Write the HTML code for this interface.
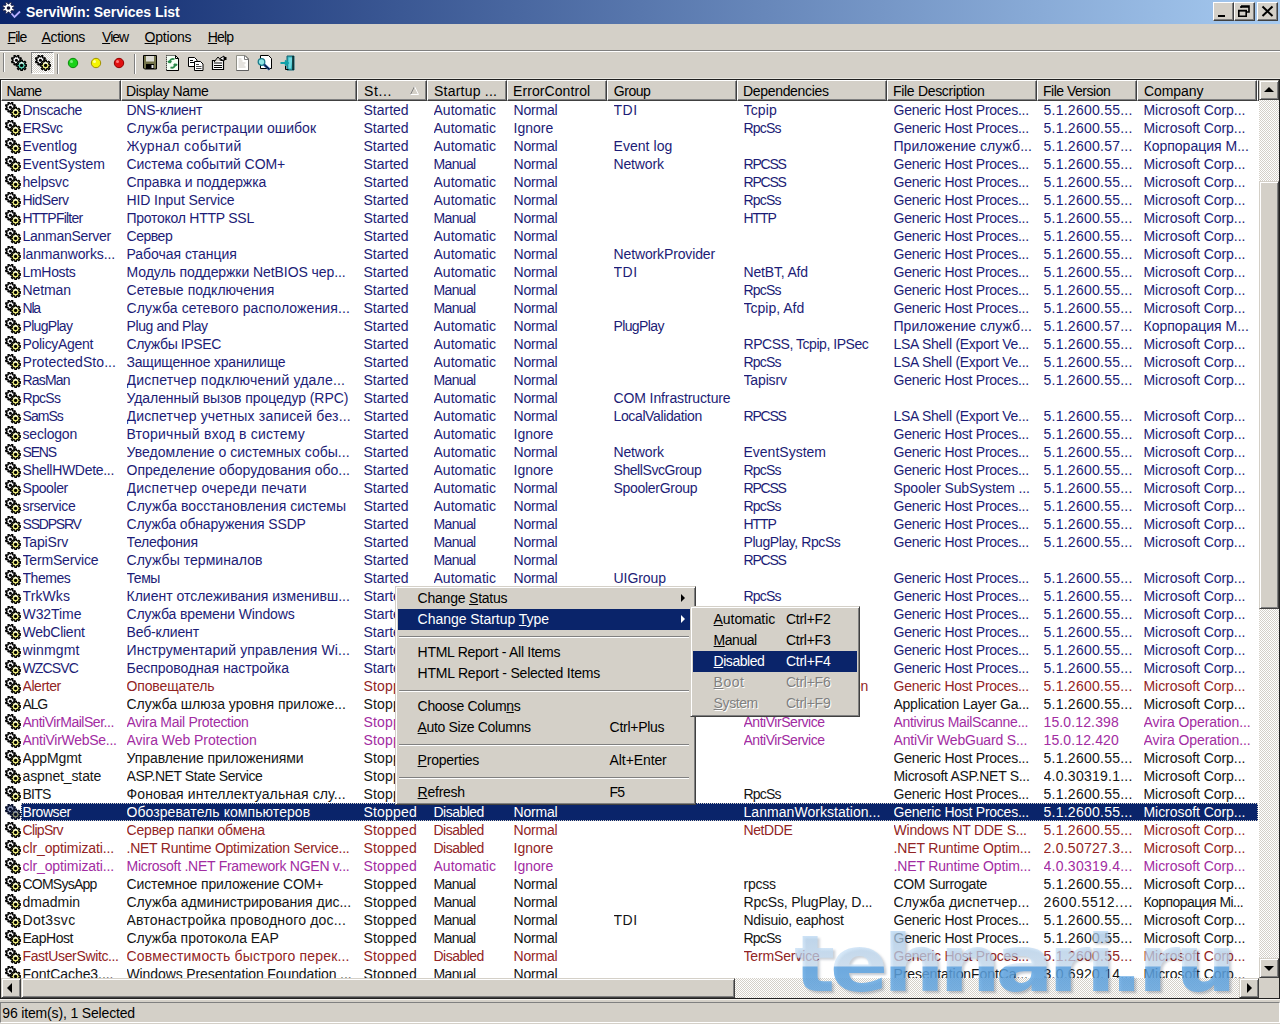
<!DOCTYPE html>
<html lang="ru">
<head>
<meta charset="utf-8">
<title>ServiWin: Services List</title>
<style>
*{box-sizing:border-box;margin:0;padding:0}
html,body{width:1280px;height:1024px;overflow:hidden;background:#d4d0c8}
body{font-family:"Liberation Sans","DejaVu Sans",sans-serif;font-size:14px;color:#000;position:relative}
#win{position:absolute;left:0;top:0;width:1280px;height:1024px;overflow:hidden;background:#d4d0c8}
#title{position:absolute;left:0;top:0;width:1280px;height:24px;background:linear-gradient(90deg,#0a246a 0%,#a6caf0 100%)}
#title .tt{position:absolute;left:26px;top:2px;line-height:20px;font-size:14px;font-weight:bold;color:#fff;white-space:nowrap;letter-spacing:-0.05px}
.wb{position:absolute;top:2px;width:21px;height:19px;background:#d4d0c8;border:1px solid;border-color:#fff #404040 #404040 #fff;box-shadow:inset -1px -1px 0 #808080}
#menubar{position:absolute;left:0;top:24px;width:1280px;height:25px}
#menubar span{position:absolute;top:3px;line-height:20px;white-space:nowrap}
u{text-decoration:underline;text-underline-offset:1px}
#tbsep{position:absolute;left:0;top:50px;width:1280px;height:2px;border-top:1px solid #808080;border-bottom:1px solid #fff}
#toolbar{position:absolute;left:0;top:51px;width:1280px;height:27px}
.vsep{position:absolute;top:3px;width:2px;height:20px;border-left:1px solid #808080;border-right:1px solid #fff}
.grip{position:absolute;left:3px;top:2px;width:2px;height:19px;border-left:1px solid #808080;border-right:1px solid #fff}
.ti{position:absolute;top:4px;width:16px;height:16px}
#listbg{position:absolute;left:0;top:78px;width:1280px;height:921px;background:#fff;border-top:1px solid #e8e6e0}
#frame{position:absolute;left:0;top:79px;width:1280px;height:920px;border:1px solid #202020;pointer-events:none}
#rowsclip{position:absolute;left:0;top:0;width:1259px;height:978px;overflow:hidden}
#hdr{position:absolute;left:0;top:80px;width:1259px;height:21px}
.hc{position:absolute;top:0;height:21px;background:#d4d0c8;border:1px solid;border-color:#fff #404040 #404040 #fff;box-shadow:inset -1px -1px 0 #808080;overflow:hidden;white-space:nowrap}
.hc span{position:absolute;left:5px;top:1px;line-height:19px}
.sort{position:absolute;left:52px;top:5px}
.r{position:absolute;left:0;width:1258px;height:18px;white-space:nowrap}
.ic{position:absolute;left:5px;top:.5px}
.c{position:absolute;top:0;line-height:18px;height:18px;overflow:hidden;white-space:nowrap}
.c0{left:22.5px;width:98px}.c1{left:126.5px;width:230px}.c2{left:363.5px;width:63px}.c3{left:433.5px;width:73px}.c4{left:513.5px;width:93px}
.c5{left:613.5px;width:123px}.c6{left:743.5px;width:143px}.c7{left:893.5px;width:143px}.c8{left:1043.5px;width:93px}.c9{left:1143.5px;width:113px}
.b{color:#1c1c76}.rd{color:#922424}.p{color:#a22ca2}.k{color:#141414}
.sel{color:#fff}
.selbg{position:absolute;left:21px;top:0;width:1237px;height:18px;background:#0a246a;outline:1px dotted #d4d0c8;outline-offset:-1px}
.dith{background-color:#fff;background-image:conic-gradient(#d4d0c8 25%,#fff 0 50%,#d4d0c8 0 75%,#fff 0);background-size:2px 2px}
.sb{position:absolute;background:#d4d0c8;border:1px solid;border-color:#d4d0c8 #404040 #404040 #d4d0c8;box-shadow:inset 1px 1px 0 #fff,inset -1px -1px 0 #808080}
.ar{position:absolute;width:0;height:0}
#status{position:absolute;left:0;top:999px;width:1280px;height:25px;border-top:1px solid #f4f2ee}
#spane{position:absolute;left:0;top:2px;width:1280px;height:21px;border:1px solid;border-color:#808080 #fff #fff #808080}
#status span{position:absolute;left:2px;top:3px;line-height:20px;white-space:nowrap}
.menu{position:absolute;background:#d4d0c8;border:1px solid;border-color:#d4d0c8 #404040 #404040 #d4d0c8;box-shadow:inset 1px 1px 0 #fff,inset -1px -1px 0 #808080}
.mi{position:absolute;left:2px;height:21px;line-height:21px;white-space:nowrap}
.mi .t{position:absolute;top:0}
.mi.h{background:#0a246a;color:#fff}
.mi.d{color:#808080;text-shadow:1px 1px 0 #fff}
.ms{position:absolute;left:3px;height:2px;border-top:1px solid #808080;border-bottom:1px solid #fff}
.ma{position:absolute;top:6px;width:0;height:0;border-top:4px solid transparent;border-bottom:4px solid transparent;border-left:4px solid #000}
.h .ma{border-left-color:#fff}
#wm{position:absolute;left:794px;top:914px;height:100px;font-family:"DejaVu Sans","Liberation Sans",sans-serif;font-weight:bold;font-size:78px;line-height:100px;white-space:nowrap;letter-spacing:-4.5px;transform:scaleX(1.1);transform-origin:0 0;color:transparent;background:linear-gradient(180deg,rgba(165,203,238,.7) 0%,rgba(205,227,247,.7) 52%,rgba(90,162,226,.82) 53%,rgba(120,182,234,.82) 100%);-webkit-background-clip:text;background-clip:text;filter:drop-shadow(2px 2px 1px rgba(40,60,90,.35))}
</style>
</head>
<body>
<svg width="0" height="0" style="position:absolute">
<defs>
<g id="gear">
<path d="M10.2 6.6 9.8 7.6 8.1 7.3 7.5 7.9 7.8 9.6 6.8 10.0 5.8 8.6 5.0 8.6 4.0 10.0 3.0 9.6 3.3 7.9 2.7 7.3 1.0 7.6 0.6 6.6 2.0 5.6 2.0 4.8 0.6 3.8 1.0 2.8 2.7 3.1 3.3 2.5 3.0 0.8 4.0 0.4 5.0 1.8 5.8 1.8 6.8 0.4 7.8 0.8 7.5 2.5 8.1 3.1 9.8 2.8 10.2 3.8 8.8 4.8 8.8 5.6Z" fill="#fff" stroke="#000" stroke-width="1.350" stroke-linejoin="miter"/>
<circle cx="5.400" cy="5.200" r="1.500" fill="#000"/>
<path d="M15.8 9.8 15.8 11.0 14.1 11.4 13.7 12.2 14.7 13.6 13.8 14.5 12.4 13.5 11.6 13.9 11.2 15.6 10.0 15.6 9.6 13.9 8.8 13.5 7.4 14.5 6.5 13.6 7.5 12.2 7.1 11.4 5.4 11.0 5.4 9.8 7.1 9.4 7.5 8.6 6.5 7.2 7.4 6.3 8.8 7.3 9.6 6.9 10.0 5.2 11.2 5.2 11.6 6.9 12.4 7.3 13.8 6.3 14.7 7.2 13.7 8.6 14.1 9.4Z" fill="#f4f480" stroke="#000" stroke-width="1.350" stroke-linejoin="miter"/>
<path d="M7.800 8.500a3.300 3.300 0 0 1 5.600 0z" fill="#fff"/>
<circle cx="10.600" cy="10.400" r="1.700" fill="#000"/>
</g>
<g id="gears">
<path d="M10.2 6.6 9.8 7.6 8.1 7.3 7.5 7.9 7.8 9.6 6.8 10.0 5.8 8.6 5.0 8.6 4.0 10.0 3.0 9.6 3.3 7.9 2.7 7.3 1.0 7.6 0.6 6.6 2.0 5.6 2.0 4.8 0.6 3.8 1.0 2.8 2.7 3.1 3.3 2.5 3.0 0.8 4.0 0.4 5.0 1.8 5.8 1.8 6.8 0.4 7.8 0.8 7.5 2.5 8.1 3.1 9.8 2.8 10.2 3.8 8.8 4.8 8.8 5.6Z" fill="#8a96b8" stroke="#040c28" stroke-width="1.350" stroke-linejoin="miter"/>
<circle cx="5.400" cy="5.200" r="1.500" fill="#040c28"/>
<path d="M15.8 9.8 15.8 11.0 14.1 11.4 13.7 12.2 14.7 13.6 13.8 14.5 12.4 13.5 11.6 13.9 11.2 15.6 10.0 15.6 9.6 13.9 8.8 13.5 7.4 14.5 6.5 13.6 7.5 12.2 7.1 11.4 5.4 11.0 5.4 9.8 7.1 9.4 7.5 8.6 6.5 7.2 7.4 6.3 8.8 7.3 9.6 6.9 10.0 5.2 11.2 5.2 11.6 6.9 12.4 7.3 13.8 6.3 14.7 7.2 13.7 8.6 14.1 9.4Z" fill="#8c9070" stroke="#040c28" stroke-width="1.350" stroke-linejoin="miter"/>
<path d="M7.800 8.500a3.300 3.300 0 0 1 5.600 0z" fill="#8a96b8"/>
<circle cx="10.600" cy="10.400" r="1.700" fill="#040c28"/>
</g>
<g id="gearw">
<path d="M12.3 7.5 11.7 9.0 9.7 8.4 8.9 9.2 9.5 11.2 8.0 11.8 7.0 10.0 6.0 10.0 5.0 11.8 3.5 11.2 4.1 9.2 3.3 8.4 1.3 9.0 0.7 7.5 2.5 6.5 2.5 5.5 0.7 4.5 1.3 3.0 3.3 3.6 4.1 2.8 3.5 0.8 5.0 0.2 6.0 2.0 7.0 2.0 8.0 0.2 9.5 0.8 8.9 2.8 9.7 3.6 11.7 3.0 12.3 4.5 10.5 5.5 10.5 6.5Z" fill="#fff" stroke="#1a1a40" stroke-width=".8"/>
<circle cx="6.500" cy="6" r="1.800" fill="#101030"/>
<path d="M9.500 11.500l3 3.500 5.500-5.500" fill="none" stroke="#b8b0ff" stroke-width="1.800"/>
</g>
<g id="gearc">
<path d="M10.2 6.6 9.8 7.6 8.1 7.3 7.5 7.9 7.8 9.6 6.8 10.0 5.8 8.6 5.0 8.6 4.0 10.0 3.0 9.6 3.3 7.9 2.7 7.3 1.0 7.6 0.6 6.6 2.0 5.6 2.0 4.8 0.6 3.8 1.0 2.8 2.7 3.1 3.3 2.5 3.0 0.8 4.0 0.4 5.0 1.8 5.8 1.8 6.8 0.4 7.8 0.8 7.5 2.5 8.1 3.1 9.8 2.8 10.2 3.8 8.8 4.8 8.8 5.6Z" fill="#fff" stroke="#000" stroke-width="1.350" stroke-linejoin="miter"/>
<circle cx="5.400" cy="5.200" r="1.500" fill="#000"/>
<path d="M15.8 9.8 15.8 11.0 14.1 11.4 13.7 12.2 14.7 13.6 13.8 14.5 12.4 13.5 11.6 13.9 11.2 15.6 10.0 15.6 9.6 13.9 8.8 13.5 7.4 14.5 6.5 13.6 7.5 12.2 7.1 11.4 5.4 11.0 5.4 9.8 7.1 9.4 7.5 8.6 6.5 7.2 7.4 6.3 8.8 7.3 9.6 6.9 10.0 5.2 11.2 5.2 11.6 6.9 12.4 7.3 13.8 6.3 14.7 7.2 13.7 8.6 14.1 9.4Z" fill="#58d8b8" stroke="#000" stroke-width="1.350" stroke-linejoin="miter"/>
<path d="M7.800 8.500a3.300 3.300 0 0 1 5.600 0z" fill="#fff"/>
<circle cx="10.600" cy="10.400" r="1.700" fill="#000"/>
</g>
</defs>
</svg>
<div id="win">
<div id="title"><svg style="position:absolute;left:2px;top:2px" width="20" height="20" viewBox="0 0 20 20"><use href="#gearw"/></svg><span class="tt">ServiWin: Services List</span>
<div class="wb" style="left:1213px"><svg width="19" height="17" viewBox="0 0 19 17"><rect x="4" y="12" width="7" height="2" fill="#000"/></svg></div>
<div class="wb" style="left:1234px"><svg width="19" height="17" viewBox="0 0 19 17"><path d="M6 3h8v6h-2M6 3v2M6 4h8" fill="none" stroke="#000" stroke-width="1.6"/><path d="M3.8 7.8h7.4v5.4h-7.4z" fill="none" stroke="#000" stroke-width="1.6"/><path d="M3 7.5h9" stroke="#000" stroke-width="1.5"/></svg></div>
<div class="wb" style="left:1257px"><svg width="19" height="17" viewBox="0 0 19 17"><path d="M4.5 3.5l10 9.5M14.500 3.5l-10 9.500" stroke="#000" stroke-width="2" fill="none"/></svg></div>
</div>
<div id="menubar"><span style="left:7.6px;letter-spacing:-1.00px"><u>F</u>ile</span><span style="left:41.6px;letter-spacing:-0.36px"><u>A</u>ctions</span><span style="left:102.1px;letter-spacing:-1.00px"><u>V</u>iew</span><span style="left:144.6px;letter-spacing:-0.21px"><u>O</u>ptions</span><span style="left:207.8px;letter-spacing:-0.84px"><u>H</u>elp</span></div>
<div id="tbsep"></div>
<div id="toolbar">
<div class="grip"></div>
<svg class="ti" style="left:11px" viewBox="0 0 16 16"><use href="#gearc"/></svg>
<div class="dith" style="position:absolute;left:31px;top:1px;width:23px;height:22px;border:1px solid;border-color:#808080 #fff #fff #808080"></div>
<svg class="ti" style="left:35px" viewBox="0 0 16 16"><use href="#gear"/></svg>
<div class="vsep" style="left:57px"></div>
<svg class="ti" style="left:65px" viewBox="0 0 16 16"><circle cx="8" cy="8" r="4.700" fill="#19d219" stroke="#0a8a0a" stroke-width="1"/><circle cx="6.500" cy="6.500" r="1.500" fill="#7df07d"/></svg>
<svg class="ti" style="left:88px" viewBox="0 0 16 16"><circle cx="8" cy="8" r="4.700" fill="#f5f500" stroke="#a09000" stroke-width="1"/><circle cx="6.500" cy="6.500" r="1.500" fill="#ffff9a"/></svg>
<svg class="ti" style="left:111px" viewBox="0 0 16 16"><circle cx="8" cy="8" r="4.700" fill="#e01010" stroke="#900000" stroke-width="1"/><circle cx="6.500" cy="6.500" r="1.500" fill="#ff7a7a"/></svg>
<div class="vsep" style="left:134px"></div>
<svg class="ti" style="left:142px" viewBox="0 0 16 16"><path d="M1.500 0.500h13v13.500h-12l-1-1z" fill="#74744a" stroke="#000"/><rect x="4" y="1" width="8" height="5.500" fill="#dcdcd4"/><rect x="4" y="9" width="8" height="5" fill="#000"/><rect x="9.500" y="10" width="2" height="3" fill="#e8e8e8"/></svg>
<svg class="ti" style="left:165px" viewBox="0 0 16 16"><path d="M1.500 0.500h9l3 3v12h-12z" fill="#f4fff4" stroke="#000" stroke-dasharray="1 1"/><path d="M10.500 0.500l3 3v12h-12" fill="none" stroke="#000"/><path d="M10.500 0.500v3h3" fill="none" stroke="#000"/><path d="M9.500 4.200a3.400 3.400 0 0 0-4.800 3.600M4.700 7.800l-1.800-1.600M4.700 7.800l1.600-1.800M5.500 12.400a3.400 3.400 0 0 0 4.800-3.600M10.300 8.800l1.800 1.600M10.300 8.800l-1.600 1.800" fill="none" stroke="#2a8a4a" stroke-width="1.800"/></svg>
<svg class="ti" style="left:188px" viewBox="0 0 16 16"><path d="M0.500 2.500h6l2.500 2.500v6.500h-8.500z" fill="#fff" stroke="#000"/><path d="M2 5.500h3M2 7.500h5" stroke="#000" stroke-width="1"/><path d="M6.500 6.500h6l2.500 2.500v6.500h-8.500z" fill="#fff" stroke="#000"/><path d="M8 9.500h3M8 11.500h5.500M8 13.500h5.500" stroke="#444" stroke-width="1"/></svg>
<svg class="ti" style="left:211px" viewBox="0 0 16 16"><path d="M1.500 5.500h11v9h-11z" fill="#fff" stroke="#000" stroke-width="1.200"/><path d="M3 8h8M3 10.500h8M3 12.500h8" stroke="#000" stroke-width="1.200"/><path d="M3 7l4-5 3 3.500" fill="#d4d0c8" stroke="#000"/><path d="M9 3.500l4-2.500v5z" fill="#fff" stroke="#000"/><rect x="13" y="2" width="2.500" height="3" fill="#000"/></svg>
<svg class="ti" style="left:234px" viewBox="0 0 16 16"><path d="M2.500 0.500h8.500l3.500 3.500v11.500h-12z" fill="#fff" stroke="#909088"/><path d="M11 0.500l3.500 3.500v11.500h-12" fill="none" stroke="#606060"/><path d="M10.500 0.500v4h4" fill="none" stroke="#808080"/><path d="M4.500 4h3M4.500 6h4M4.500 8h7M4.500 10h6M4.500 12h7" stroke="#c4c0b8" stroke-width=".9"/></svg>
<svg class="ti" style="left:257px" viewBox="0 0 16 16"><path d="M3.500 0.500h8l3 3v10h-11z" fill="#fff" stroke="#000"/><circle cx="4.500" cy="7" r="3.300" fill="#8fe4e4" stroke="#1a7a8a" stroke-width="1.300"/><path d="M7 9.500l5.500 5" stroke="#20509a" stroke-width="2.400"/><path d="M7.500 10l5 4.500" stroke="#000" stroke-width=".9"/></svg>
<svg class="ti" style="left:280px" viewBox="0 0 16 16"><path d="M7 1h7v14h-7z" fill="#30b0b8" stroke="#106070"/><path d="M8.500 2.500h4l-1.500 11h-2.500z" fill="#70d8e0"/><path d="M13 1v14" stroke="#000" stroke-width="1.200"/><path d="M0.500 8h7M5 5.500l3 2.500-3 2.500" fill="none" stroke="#10a0a8" stroke-width="1.800"/><path d="M5.500 11v3.500h3" fill="none" stroke="#000"/></svg>
</div>
<div id="listbg"></div>
<div id="rowsclip">
<div class="r b" style="top:101px"><svg class="ic" width="16" height="16" viewBox="0 0 16 16"><use href="#gear"/></svg><span class="c c0" style="letter-spacing:-.34px">Dnscache</span><span class="c c1" style="letter-spacing:-.27px">DNS-клиент</span><span class="c c2">Started</span><span class="c c3" style="letter-spacing:.03px">Automatic</span><span class="c c4" style="letter-spacing:-.20px">Normal</span><span class="c c5" style="letter-spacing:.57px">TDI</span><span class="c c6" style="letter-spacing:.13px">Tcpip</span><span class="c c7" style="letter-spacing:-.25px">Generic Host Proces...</span><span class="c c8" style="letter-spacing:.25px">5.1.2600.55...</span><span class="c c9" style="letter-spacing:-.05px">Microsoft Corp...</span></div>
<div class="r b" style="top:119px"><svg class="ic" width="16" height="16" viewBox="0 0 16 16"><use href="#gear"/></svg><span class="c c0" style="letter-spacing:-.60px">ERSvc</span><span class="c c1" style="letter-spacing:.06px">Служба регистрации ошибок</span><span class="c c2">Started</span><span class="c c3" style="letter-spacing:.03px">Automatic</span><span class="c c4">Ignore</span><span class="c c6" style="letter-spacing:-.78px">RpcSs</span><span class="c c7" style="letter-spacing:-.25px">Generic Host Proces...</span><span class="c c8" style="letter-spacing:.25px">5.1.2600.55...</span><span class="c c9" style="letter-spacing:-.05px">Microsoft Corp...</span></div>
<div class="r b" style="top:137px"><svg class="ic" width="16" height="16" viewBox="0 0 16 16"><use href="#gear"/></svg><span class="c c0">Eventlog</span><span class="c c1" style="letter-spacing:.36px">Журнал событий</span><span class="c c2">Started</span><span class="c c3" style="letter-spacing:.03px">Automatic</span><span class="c c4" style="letter-spacing:-.20px">Normal</span><span class="c c5" style="letter-spacing:.05px">Event log</span><span class="c c7" style="letter-spacing:.05px">Приложение служб...</span><span class="c c8" style="letter-spacing:.25px">5.1.2600.57...</span><span class="c c9">Корпорация M...</span></div>
<div class="r b" style="top:155px"><svg class="ic" width="16" height="16" viewBox="0 0 16 16"><use href="#gear"/></svg><span class="c c0">EventSystem</span><span class="c c1" style="letter-spacing:-.07px">Система событий COM+</span><span class="c c2">Started</span><span class="c c3" style="letter-spacing:-.66px">Manual</span><span class="c c4" style="letter-spacing:-.20px">Normal</span><span class="c c5" style="letter-spacing:-.16px">Network</span><span class="c c6" style="letter-spacing:-1.20px">RPCSS</span><span class="c c7" style="letter-spacing:-.25px">Generic Host Proces...</span><span class="c c8" style="letter-spacing:.25px">5.1.2600.55...</span><span class="c c9" style="letter-spacing:-.05px">Microsoft Corp...</span></div>
<div class="r b" style="top:173px"><svg class="ic" width="16" height="16" viewBox="0 0 16 16"><use href="#gear"/></svg><span class="c c0" style="letter-spacing:-.18px">helpsvc</span><span class="c c1" style="letter-spacing:-.07px">Справка и поддержка</span><span class="c c2">Started</span><span class="c c3" style="letter-spacing:.03px">Automatic</span><span class="c c4" style="letter-spacing:-.20px">Normal</span><span class="c c6" style="letter-spacing:-1.20px">RPCSS</span><span class="c c7" style="letter-spacing:-.25px">Generic Host Proces...</span><span class="c c8" style="letter-spacing:.25px">5.1.2600.55...</span><span class="c c9" style="letter-spacing:-.05px">Microsoft Corp...</span></div>
<div class="r b" style="top:191px"><svg class="ic" width="16" height="16" viewBox="0 0 16 16"><use href="#gear"/></svg><span class="c c0" style="letter-spacing:-.55px">HidServ</span><span class="c c1" style="letter-spacing:-.10px">HID Input Service</span><span class="c c2">Started</span><span class="c c3" style="letter-spacing:.03px">Automatic</span><span class="c c4" style="letter-spacing:-.20px">Normal</span><span class="c c6" style="letter-spacing:-.78px">RpcSs</span><span class="c c7" style="letter-spacing:-.25px">Generic Host Proces...</span><span class="c c8" style="letter-spacing:.25px">5.1.2600.55...</span><span class="c c9" style="letter-spacing:-.05px">Microsoft Corp...</span></div>
<div class="r b" style="top:209px"><svg class="ic" width="16" height="16" viewBox="0 0 16 16"><use href="#gear"/></svg><span class="c c0" style="letter-spacing:-.78px">HTTPFilter</span><span class="c c1" style="letter-spacing:-.26px">Протокол HTTP SSL</span><span class="c c2">Started</span><span class="c c3" style="letter-spacing:-.66px">Manual</span><span class="c c4" style="letter-spacing:-.20px">Normal</span><span class="c c6" style="letter-spacing:-1.07px">HTTP</span><span class="c c7" style="letter-spacing:-.25px">Generic Host Proces...</span><span class="c c8" style="letter-spacing:.25px">5.1.2600.55...</span><span class="c c9" style="letter-spacing:-.05px">Microsoft Corp...</span></div>
<div class="r b" style="top:227px"><svg class="ic" width="16" height="16" viewBox="0 0 16 16"><use href="#gear"/></svg><span class="c c0" style="letter-spacing:-.28px">LanmanServer</span><span class="c c1" style="letter-spacing:-.47px">Сервер</span><span class="c c2">Started</span><span class="c c3" style="letter-spacing:.03px">Automatic</span><span class="c c4" style="letter-spacing:-.20px">Normal</span><span class="c c7" style="letter-spacing:-.25px">Generic Host Proces...</span><span class="c c8" style="letter-spacing:.25px">5.1.2600.55...</span><span class="c c9" style="letter-spacing:-.05px">Microsoft Corp...</span></div>
<div class="r b" style="top:245px"><svg class="ic" width="16" height="16" viewBox="0 0 16 16"><use href="#gear"/></svg><span class="c c0" style="letter-spacing:-.12px">lanmanworks...</span><span class="c c1" style="letter-spacing:-.04px">Рабочая станция</span><span class="c c2">Started</span><span class="c c3" style="letter-spacing:.03px">Automatic</span><span class="c c4" style="letter-spacing:-.20px">Normal</span><span class="c c5" style="letter-spacing:-.13px">NetworkProvider</span><span class="c c7" style="letter-spacing:-.25px">Generic Host Proces...</span><span class="c c8" style="letter-spacing:.25px">5.1.2600.55...</span><span class="c c9" style="letter-spacing:-.05px">Microsoft Corp...</span></div>
<div class="r b" style="top:263px"><svg class="ic" width="16" height="16" viewBox="0 0 16 16"><use href="#gear"/></svg><span class="c c0" style="letter-spacing:-.31px">LmHosts</span><span class="c c1" style="letter-spacing:-.07px">Модуль поддержки NetBIOS чер...</span><span class="c c2">Started</span><span class="c c3" style="letter-spacing:.03px">Automatic</span><span class="c c4" style="letter-spacing:-.20px">Normal</span><span class="c c5" style="letter-spacing:.57px">TDI</span><span class="c c6" style="letter-spacing:-.17px">NetBT, Afd</span><span class="c c7" style="letter-spacing:-.25px">Generic Host Proces...</span><span class="c c8" style="letter-spacing:.25px">5.1.2600.55...</span><span class="c c9" style="letter-spacing:-.05px">Microsoft Corp...</span></div>
<div class="r b" style="top:281px"><svg class="ic" width="16" height="16" viewBox="0 0 16 16"><use href="#gear"/></svg><span class="c c0" style="letter-spacing:-.09px">Netman</span><span class="c c1" style="letter-spacing:.06px">Сетевые подключения</span><span class="c c2">Started</span><span class="c c3" style="letter-spacing:-.66px">Manual</span><span class="c c4" style="letter-spacing:-.20px">Normal</span><span class="c c6" style="letter-spacing:-.78px">RpcSs</span><span class="c c7" style="letter-spacing:-.25px">Generic Host Proces...</span><span class="c c8" style="letter-spacing:.25px">5.1.2600.55...</span><span class="c c9" style="letter-spacing:-.05px">Microsoft Corp...</span></div>
<div class="r b" style="top:299px"><svg class="ic" width="16" height="16" viewBox="0 0 16 16"><use href="#gear"/></svg><span class="c c0" style="letter-spacing:-1.20px">Nla</span><span class="c c1" style="letter-spacing:.12px">Служба сетевого расположения...</span><span class="c c2">Started</span><span class="c c3" style="letter-spacing:-.66px">Manual</span><span class="c c4" style="letter-spacing:-.20px">Normal</span><span class="c c6">Tcpip, Afd</span><span class="c c7" style="letter-spacing:-.25px">Generic Host Proces...</span><span class="c c8" style="letter-spacing:.25px">5.1.2600.55...</span><span class="c c9" style="letter-spacing:-.05px">Microsoft Corp...</span></div>
<div class="r b" style="top:317px"><svg class="ic" width="16" height="16" viewBox="0 0 16 16"><use href="#gear"/></svg><span class="c c0" style="letter-spacing:-.69px">PlugPlay</span><span class="c c1" style="letter-spacing:-.40px">Plug and Play</span><span class="c c2">Started</span><span class="c c3" style="letter-spacing:.03px">Automatic</span><span class="c c4" style="letter-spacing:-.20px">Normal</span><span class="c c5" style="letter-spacing:-.62px">PlugPlay</span><span class="c c7" style="letter-spacing:.05px">Приложение служб...</span><span class="c c8" style="letter-spacing:.25px">5.1.2600.57...</span><span class="c c9">Корпорация M...</span></div>
<div class="r b" style="top:335px"><svg class="ic" width="16" height="16" viewBox="0 0 16 16"><use href="#gear"/></svg><span class="c c0" style="letter-spacing:-.30px">PolicyAgent</span><span class="c c1" style="letter-spacing:-.37px">Службы IPSEC</span><span class="c c2">Started</span><span class="c c3" style="letter-spacing:.03px">Automatic</span><span class="c c4" style="letter-spacing:-.20px">Normal</span><span class="c c6" style="letter-spacing:-.46px">RPCSS, Tcpip, IPSec</span><span class="c c7" style="letter-spacing:-.27px">LSA Shell (Export Ve...</span><span class="c c8" style="letter-spacing:.25px">5.1.2600.55...</span><span class="c c9" style="letter-spacing:-.05px">Microsoft Corp...</span></div>
<div class="r b" style="top:353px"><svg class="ic" width="16" height="16" viewBox="0 0 16 16"><use href="#gear"/></svg><span class="c c0" style="letter-spacing:.06px">ProtectedSto...</span><span class="c c1" style="letter-spacing:-.20px">Защищенное хранилище</span><span class="c c2">Started</span><span class="c c3" style="letter-spacing:.03px">Automatic</span><span class="c c4" style="letter-spacing:-.20px">Normal</span><span class="c c6" style="letter-spacing:-.78px">RpcSs</span><span class="c c7" style="letter-spacing:-.27px">LSA Shell (Export Ve...</span><span class="c c8" style="letter-spacing:.25px">5.1.2600.55...</span><span class="c c9" style="letter-spacing:-.05px">Microsoft Corp...</span></div>
<div class="r b" style="top:371px"><svg class="ic" width="16" height="16" viewBox="0 0 16 16"><use href="#gear"/></svg><span class="c c0" style="letter-spacing:-.81px">RasMan</span><span class="c c1" style="letter-spacing:.20px">Диспетчер подключений удале...</span><span class="c c2">Started</span><span class="c c3" style="letter-spacing:-.66px">Manual</span><span class="c c4" style="letter-spacing:-.20px">Normal</span><span class="c c6" style="letter-spacing:-.14px">Tapisrv</span><span class="c c7" style="letter-spacing:-.25px">Generic Host Proces...</span><span class="c c8" style="letter-spacing:.25px">5.1.2600.55...</span><span class="c c9" style="letter-spacing:-.05px">Microsoft Corp...</span></div>
<div class="r b" style="top:389px"><svg class="ic" width="16" height="16" viewBox="0 0 16 16"><use href="#gear"/></svg><span class="c c0" style="letter-spacing:-.68px">RpcSs</span><span class="c c1" style="letter-spacing:-.07px">Удаленный вызов процедур (RPC)</span><span class="c c2">Started</span><span class="c c3" style="letter-spacing:.03px">Automatic</span><span class="c c4" style="letter-spacing:-.20px">Normal</span><span class="c c5" style="letter-spacing:-.11px">COM Infrastructure</span></div>
<div class="r b" style="top:407px"><svg class="ic" width="16" height="16" viewBox="0 0 16 16"><use href="#gear"/></svg><span class="c c0" style="letter-spacing:-.96px">SamSs</span><span class="c c1" style="letter-spacing:.18px">Диспетчер учетных записей без...</span><span class="c c2">Started</span><span class="c c3" style="letter-spacing:.03px">Automatic</span><span class="c c4" style="letter-spacing:-.20px">Normal</span><span class="c c5" style="letter-spacing:-.37px">LocalValidation</span><span class="c c6" style="letter-spacing:-1.20px">RPCSS</span><span class="c c7" style="letter-spacing:-.27px">LSA Shell (Export Ve...</span><span class="c c8" style="letter-spacing:.25px">5.1.2600.55...</span><span class="c c9" style="letter-spacing:-.05px">Microsoft Corp...</span></div>
<div class="r b" style="top:425px"><svg class="ic" width="16" height="16" viewBox="0 0 16 16"><use href="#gear"/></svg><span class="c c0" style="letter-spacing:-.19px">seclogon</span><span class="c c1" style="letter-spacing:.22px">Вторичный вход в систему</span><span class="c c2">Started</span><span class="c c3" style="letter-spacing:.03px">Automatic</span><span class="c c4">Ignore</span><span class="c c7" style="letter-spacing:-.25px">Generic Host Proces...</span><span class="c c8" style="letter-spacing:.25px">5.1.2600.55...</span><span class="c c9" style="letter-spacing:-.05px">Microsoft Corp...</span></div>
<div class="r b" style="top:443px"><svg class="ic" width="16" height="16" viewBox="0 0 16 16"><use href="#gear"/></svg><span class="c c0" style="letter-spacing:-1.20px">SENS</span><span class="c c1" style="letter-spacing:.03px">Уведомление о системных собы...</span><span class="c c2">Started</span><span class="c c3" style="letter-spacing:.03px">Automatic</span><span class="c c4" style="letter-spacing:-.20px">Normal</span><span class="c c5" style="letter-spacing:-.16px">Network</span><span class="c c6">EventSystem</span><span class="c c7" style="letter-spacing:-.25px">Generic Host Proces...</span><span class="c c8" style="letter-spacing:.25px">5.1.2600.55...</span><span class="c c9" style="letter-spacing:-.05px">Microsoft Corp...</span></div>
<div class="r b" style="top:461px"><svg class="ic" width="16" height="16" viewBox="0 0 16 16"><use href="#gear"/></svg><span class="c c0" style="letter-spacing:-.30px">ShellHWDete...</span><span class="c c1">Определение оборудования обо...</span><span class="c c2">Started</span><span class="c c3" style="letter-spacing:.03px">Automatic</span><span class="c c4">Ignore</span><span class="c c5" style="letter-spacing:-.43px">ShellSvcGroup</span><span class="c c6" style="letter-spacing:-.78px">RpcSs</span><span class="c c7" style="letter-spacing:-.25px">Generic Host Proces...</span><span class="c c8" style="letter-spacing:.25px">5.1.2600.55...</span><span class="c c9" style="letter-spacing:-.05px">Microsoft Corp...</span></div>
<div class="r b" style="top:479px"><svg class="ic" width="16" height="16" viewBox="0 0 16 16"><use href="#gear"/></svg><span class="c c0" style="letter-spacing:-.43px">Spooler</span><span class="c c1" style="letter-spacing:.26px">Диспетчер очереди печати</span><span class="c c2">Started</span><span class="c c3" style="letter-spacing:.03px">Automatic</span><span class="c c4" style="letter-spacing:-.20px">Normal</span><span class="c c5" style="letter-spacing:-.29px">SpoolerGroup</span><span class="c c6" style="letter-spacing:-1.20px">RPCSS</span><span class="c c7" style="letter-spacing:-.14px">Spooler SubSystem ...</span><span class="c c8" style="letter-spacing:.25px">5.1.2600.55...</span><span class="c c9" style="letter-spacing:-.05px">Microsoft Corp...</span></div>
<div class="r b" style="top:497px"><svg class="ic" width="16" height="16" viewBox="0 0 16 16"><use href="#gear"/></svg><span class="c c0" style="letter-spacing:-.35px">srservice</span><span class="c c1" style="letter-spacing:.03px">Служба восстановления системы</span><span class="c c2">Started</span><span class="c c3" style="letter-spacing:.03px">Automatic</span><span class="c c4" style="letter-spacing:-.20px">Normal</span><span class="c c6" style="letter-spacing:-.78px">RpcSs</span><span class="c c7" style="letter-spacing:-.25px">Generic Host Proces...</span><span class="c c8" style="letter-spacing:.25px">5.1.2600.55...</span><span class="c c9" style="letter-spacing:-.05px">Microsoft Corp...</span></div>
<div class="r b" style="top:515px"><svg class="ic" width="16" height="16" viewBox="0 0 16 16"><use href="#gear"/></svg><span class="c c0" style="letter-spacing:-1.20px">SSDPSRV</span><span class="c c1" style="letter-spacing:-.15px">Служба обнаружения SSDP</span><span class="c c2">Started</span><span class="c c3" style="letter-spacing:-.66px">Manual</span><span class="c c4" style="letter-spacing:-.20px">Normal</span><span class="c c6" style="letter-spacing:-1.07px">HTTP</span><span class="c c7" style="letter-spacing:-.25px">Generic Host Proces...</span><span class="c c8" style="letter-spacing:.25px">5.1.2600.55...</span><span class="c c9" style="letter-spacing:-.05px">Microsoft Corp...</span></div>
<div class="r b" style="top:533px"><svg class="ic" width="16" height="16" viewBox="0 0 16 16"><use href="#gear"/></svg><span class="c c0" style="letter-spacing:-.16px">TapiSrv</span><span class="c c1" style="letter-spacing:-.25px">Телефония</span><span class="c c2">Started</span><span class="c c3" style="letter-spacing:-.66px">Manual</span><span class="c c4" style="letter-spacing:-.20px">Normal</span><span class="c c6" style="letter-spacing:-.42px">PlugPlay, RpcSs</span><span class="c c7" style="letter-spacing:-.25px">Generic Host Proces...</span><span class="c c8" style="letter-spacing:.25px">5.1.2600.55...</span><span class="c c9" style="letter-spacing:-.05px">Microsoft Corp...</span></div>
<div class="r b" style="top:551px"><svg class="ic" width="16" height="16" viewBox="0 0 16 16"><use href="#gear"/></svg><span class="c c0" style="letter-spacing:-.17px">TermService</span><span class="c c1" style="letter-spacing:.04px">Службы терминалов</span><span class="c c2">Started</span><span class="c c3" style="letter-spacing:-.66px">Manual</span><span class="c c4" style="letter-spacing:-.20px">Normal</span><span class="c c6" style="letter-spacing:-1.20px">RPCSS</span></div>
<div class="r b" style="top:569px"><svg class="ic" width="16" height="16" viewBox="0 0 16 16"><use href="#gear"/></svg><span class="c c0" style="letter-spacing:-.45px">Themes</span><span class="c c1" style="letter-spacing:-.46px">Темы</span><span class="c c2">Started</span><span class="c c3" style="letter-spacing:.03px">Automatic</span><span class="c c4" style="letter-spacing:-.20px">Normal</span><span class="c c5" style="letter-spacing:-.05px">UIGroup</span><span class="c c7" style="letter-spacing:-.25px">Generic Host Proces...</span><span class="c c8" style="letter-spacing:.25px">5.1.2600.55...</span><span class="c c9" style="letter-spacing:-.05px">Microsoft Corp...</span></div>
<div class="r b" style="top:587px"><svg class="ic" width="16" height="16" viewBox="0 0 16 16"><use href="#gear"/></svg><span class="c c0" style="letter-spacing:.10px">TrkWks</span><span class="c c1">Клиент отслеживания изменивш...</span><span class="c c2">Started</span><span class="c c3" style="letter-spacing:.03px">Automatic</span><span class="c c4" style="letter-spacing:-.20px">Normal</span><span class="c c6" style="letter-spacing:-.78px">RpcSs</span><span class="c c7" style="letter-spacing:-.25px">Generic Host Proces...</span><span class="c c8" style="letter-spacing:.25px">5.1.2600.55...</span><span class="c c9" style="letter-spacing:-.05px">Microsoft Corp...</span></div>
<div class="r b" style="top:605px"><svg class="ic" width="16" height="16" viewBox="0 0 16 16"><use href="#gear"/></svg><span class="c c0" style="letter-spacing:-.07px">W32Time</span><span class="c c1" style="letter-spacing:-.13px">Служба времени Windows</span><span class="c c2">Started</span><span class="c c3" style="letter-spacing:.03px">Automatic</span><span class="c c4" style="letter-spacing:-.20px">Normal</span><span class="c c7" style="letter-spacing:-.25px">Generic Host Proces...</span><span class="c c8" style="letter-spacing:.25px">5.1.2600.55...</span><span class="c c9" style="letter-spacing:-.05px">Microsoft Corp...</span></div>
<div class="r b" style="top:623px"><svg class="ic" width="16" height="16" viewBox="0 0 16 16"><use href="#gear"/></svg><span class="c c0" style="letter-spacing:-.25px">WebClient</span><span class="c c1" style="letter-spacing:-.14px">Веб-клиент</span><span class="c c2">Started</span><span class="c c3" style="letter-spacing:.03px">Automatic</span><span class="c c4" style="letter-spacing:-.20px">Normal</span><span class="c c5" style="letter-spacing:-.13px">NetworkProvider</span><span class="c c6">MRxDAV</span><span class="c c7" style="letter-spacing:-.25px">Generic Host Proces...</span><span class="c c8" style="letter-spacing:.25px">5.1.2600.55...</span><span class="c c9" style="letter-spacing:-.05px">Microsoft Corp...</span></div>
<div class="r b" style="top:641px"><svg class="ic" width="16" height="16" viewBox="0 0 16 16"><use href="#gear"/></svg><span class="c c0" style="letter-spacing:.16px">winmgmt</span><span class="c c1" style="letter-spacing:.10px">Инструментарий управления Wi...</span><span class="c c2">Started</span><span class="c c3" style="letter-spacing:.03px">Automatic</span><span class="c c4">Ignore</span><span class="c c6" style="letter-spacing:-1.20px">RPCSS</span><span class="c c7" style="letter-spacing:-.25px">Generic Host Proces...</span><span class="c c8" style="letter-spacing:.25px">5.1.2600.55...</span><span class="c c9" style="letter-spacing:-.05px">Microsoft Corp...</span></div>
<div class="r b" style="top:659px"><svg class="ic" width="16" height="16" viewBox="0 0 16 16"><use href="#gear"/></svg><span class="c c0" style="letter-spacing:-.87px">WZCSVC</span><span class="c c1" style="letter-spacing:-.05px">Беспроводная настройка</span><span class="c c2">Started</span><span class="c c3" style="letter-spacing:.03px">Automatic</span><span class="c c4" style="letter-spacing:-.20px">Normal</span><span class="c c5" style="letter-spacing:.57px">TDI</span><span class="c c6">RpcSs, Ndisuio</span><span class="c c7" style="letter-spacing:-.25px">Generic Host Proces...</span><span class="c c8" style="letter-spacing:.25px">5.1.2600.55...</span><span class="c c9" style="letter-spacing:-.05px">Microsoft Corp...</span></div>
<div class="r rd" style="top:677px"><svg class="ic" width="16" height="16" viewBox="0 0 16 16"><use href="#gear"/></svg><span class="c c0" style="letter-spacing:-.43px">Alerter</span><span class="c c1" style="letter-spacing:-.13px">Оповещатель</span><span class="c c2" style="letter-spacing:.19px">Stopped</span><span class="c c3" style="letter-spacing:-.53px">Disabled</span><span class="c c4" style="letter-spacing:-.20px">Normal</span><span class="c c6" style="letter-spacing:.03px">LanmanWorkstation</span><span class="c c7" style="letter-spacing:-.25px">Generic Host Proces...</span><span class="c c8" style="letter-spacing:.25px">5.1.2600.55...</span><span class="c c9" style="letter-spacing:-.05px">Microsoft Corp...</span></div>
<div class="r k" style="top:695px"><svg class="ic" width="16" height="16" viewBox="0 0 16 16"><use href="#gear"/></svg><span class="c c0" style="letter-spacing:-1.20px">ALG</span><span class="c c1">Служба шлюза уровня приложе...</span><span class="c c2" style="letter-spacing:.19px">Stopped</span><span class="c c3" style="letter-spacing:-.66px">Manual</span><span class="c c4" style="letter-spacing:-.20px">Normal</span><span class="c c7" style="letter-spacing:-.26px">Application Layer Ga...</span><span class="c c8" style="letter-spacing:.25px">5.1.2600.55...</span><span class="c c9" style="letter-spacing:-.05px">Microsoft Corp...</span></div>
<div class="r p" style="top:713px"><svg class="ic" width="16" height="16" viewBox="0 0 16 16"><use href="#gear"/></svg><span class="c c0" style="letter-spacing:-.47px">AntiVirMailSer...</span><span class="c c1" style="letter-spacing:-.29px">Avira Mail Protection</span><span class="c c2" style="letter-spacing:.19px">Stopped</span><span class="c c3" style="letter-spacing:.03px">Automatic</span><span class="c c4" style="letter-spacing:-.20px">Normal</span><span class="c c6" style="letter-spacing:-.47px">AntiVirService</span><span class="c c7" style="letter-spacing:-.34px">Antivirus MailScanne...</span><span class="c c8" style="letter-spacing:.13px">15.0.12.398</span><span class="c c9" style="letter-spacing:-.09px">Avira Operation...</span></div>
<div class="r p" style="top:731px"><svg class="ic" width="16" height="16" viewBox="0 0 16 16"><use href="#gear"/></svg><span class="c c0" style="letter-spacing:-.28px">AntiVirWebSe...</span><span class="c c1" style="letter-spacing:-.04px">Avira Web Protection</span><span class="c c2" style="letter-spacing:.19px">Stopped</span><span class="c c3" style="letter-spacing:.03px">Automatic</span><span class="c c4" style="letter-spacing:-.20px">Normal</span><span class="c c6" style="letter-spacing:-.47px">AntiVirService</span><span class="c c7" style="letter-spacing:-.17px">AntiVir WebGuard S...</span><span class="c c8" style="letter-spacing:.13px">15.0.12.420</span><span class="c c9" style="letter-spacing:-.09px">Avira Operation...</span></div>
<div class="r k" style="top:749px"><svg class="ic" width="16" height="16" viewBox="0 0 16 16"><use href="#gear"/></svg><span class="c c0" style="letter-spacing:-.14px">AppMgmt</span><span class="c c1" style="letter-spacing:-.07px">Управление приложениями</span><span class="c c2" style="letter-spacing:.19px">Stopped</span><span class="c c3" style="letter-spacing:-.66px">Manual</span><span class="c c4" style="letter-spacing:-.20px">Normal</span><span class="c c7" style="letter-spacing:-.25px">Generic Host Proces...</span><span class="c c8" style="letter-spacing:.25px">5.1.2600.55...</span><span class="c c9" style="letter-spacing:-.05px">Microsoft Corp...</span></div>
<div class="r k" style="top:767px"><svg class="ic" width="16" height="16" viewBox="0 0 16 16"><use href="#gear"/></svg><span class="c c0" style="letter-spacing:-.12px">aspnet_state</span><span class="c c1" style="letter-spacing:-.43px">ASP.NET State Service</span><span class="c c2" style="letter-spacing:.19px">Stopped</span><span class="c c3" style="letter-spacing:-.66px">Manual</span><span class="c c4" style="letter-spacing:-.20px">Normal</span><span class="c c7" style="letter-spacing:-.30px">Microsoft ASP.NET S...</span><span class="c c8" style="letter-spacing:.25px">4.0.30319.1...</span><span class="c c9" style="letter-spacing:-.05px">Microsoft Corp...</span></div>
<div class="r k" style="top:785px"><svg class="ic" width="16" height="16" viewBox="0 0 16 16"><use href="#gear"/></svg><span class="c c0" style="letter-spacing:-.76px">BITS</span><span class="c c1" style="letter-spacing:.10px">Фоновая интеллектуальная слу...</span><span class="c c2" style="letter-spacing:.19px">Stopped</span><span class="c c3" style="letter-spacing:-.66px">Manual</span><span class="c c4" style="letter-spacing:-.20px">Normal</span><span class="c c6" style="letter-spacing:-.78px">RpcSs</span><span class="c c7" style="letter-spacing:-.25px">Generic Host Proces...</span><span class="c c8" style="letter-spacing:.25px">5.1.2600.55...</span><span class="c c9" style="letter-spacing:-.05px">Microsoft Corp...</span></div>
<div class="r sel" style="top:803px"><i class="selbg"></i><svg class="ic" width="16" height="16" viewBox="0 0 16 16"><use href="#gears"/></svg><span class="c c0" style="letter-spacing:-.45px">Browser</span><span class="c c1" style="letter-spacing:.07px">Обозреватель компьютеров</span><span class="c c2" style="letter-spacing:.19px">Stopped</span><span class="c c3" style="letter-spacing:-.53px">Disabled</span><span class="c c4" style="letter-spacing:-.20px">Normal</span><span class="c c6" style="letter-spacing:.05px">LanmanWorkstation...</span><span class="c c7" style="letter-spacing:-.25px">Generic Host Proces...</span><span class="c c8" style="letter-spacing:.25px">5.1.2600.55...</span><span class="c c9" style="letter-spacing:-.05px">Microsoft Corp...</span></div>
<div class="r rd" style="top:821px"><svg class="ic" width="16" height="16" viewBox="0 0 16 16"><use href="#gear"/></svg><span class="c c0" style="letter-spacing:-.67px">ClipSrv</span><span class="c c1" style="letter-spacing:-.17px">Сервер папки обмена</span><span class="c c2" style="letter-spacing:.19px">Stopped</span><span class="c c3" style="letter-spacing:-.53px">Disabled</span><span class="c c4" style="letter-spacing:-.20px">Normal</span><span class="c c6" style="letter-spacing:-.40px">NetDDE</span><span class="c c7" style="letter-spacing:-.22px">Windows NT DDE S...</span><span class="c c8" style="letter-spacing:.25px">5.1.2600.55...</span><span class="c c9" style="letter-spacing:-.05px">Microsoft Corp...</span></div>
<div class="r rd" style="top:839px"><svg class="ic" width="16" height="16" viewBox="0 0 16 16"><use href="#gear"/></svg><span class="c c0" style="letter-spacing:-.10px">clr_optimizati...</span><span class="c c1" style="letter-spacing:-.24px">.NET Runtime Optimization Service...</span><span class="c c2" style="letter-spacing:.19px">Stopped</span><span class="c c3" style="letter-spacing:-.53px">Disabled</span><span class="c c4">Ignore</span><span class="c c7" style="letter-spacing:-.15px">.NET Runtime Optim...</span><span class="c c8" style="letter-spacing:.25px">2.0.50727.3...</span><span class="c c9" style="letter-spacing:-.05px">Microsoft Corp...</span></div>
<div class="r p" style="top:857px"><svg class="ic" width="16" height="16" viewBox="0 0 16 16"><use href="#gear"/></svg><span class="c c0" style="letter-spacing:-.10px">clr_optimizati...</span><span class="c c1" style="letter-spacing:-.27px">Microsoft .NET Framework NGEN v...</span><span class="c c2" style="letter-spacing:.19px">Stopped</span><span class="c c3" style="letter-spacing:.03px">Automatic</span><span class="c c4">Ignore</span><span class="c c7" style="letter-spacing:-.15px">.NET Runtime Optim...</span><span class="c c8" style="letter-spacing:.25px">4.0.30319.4...</span><span class="c c9" style="letter-spacing:-.05px">Microsoft Corp...</span></div>
<div class="r k" style="top:875px"><svg class="ic" width="16" height="16" viewBox="0 0 16 16"><use href="#gear"/></svg><span class="c c0" style="letter-spacing:-.77px">COMSysApp</span><span class="c c1" style="letter-spacing:-.13px">Системное приложение COM+</span><span class="c c2" style="letter-spacing:.19px">Stopped</span><span class="c c3" style="letter-spacing:-.66px">Manual</span><span class="c c4" style="letter-spacing:-.20px">Normal</span><span class="c c6" style="letter-spacing:-.24px">rpcss</span><span class="c c7" style="letter-spacing:-.35px">COM Surrogate</span><span class="c c8" style="letter-spacing:.25px">5.1.2600.55...</span><span class="c c9" style="letter-spacing:-.05px">Microsoft Corp...</span></div>
<div class="r k" style="top:893px"><svg class="ic" width="16" height="16" viewBox="0 0 16 16"><use href="#gear"/></svg><span class="c c0">dmadmin</span><span class="c c1">Служба администрирования дис...</span><span class="c c2" style="letter-spacing:.19px">Stopped</span><span class="c c3" style="letter-spacing:-.66px">Manual</span><span class="c c4" style="letter-spacing:-.20px">Normal</span><span class="c c6" style="letter-spacing:-.19px">RpcSs, PlugPlay, D...</span><span class="c c7" style="letter-spacing:.15px">Служба диспетчер...</span><span class="c c8" style="letter-spacing:.60px">2600.5512....</span><span class="c c9" style="letter-spacing:-.55px">Корпорация Mi...</span></div>
<div class="r k" style="top:911px"><svg class="ic" width="16" height="16" viewBox="0 0 16 16"><use href="#gear"/></svg><span class="c c0" style="letter-spacing:.35px">Dot3svc</span><span class="c c1" style="letter-spacing:.19px">Автонастройка проводного дос...</span><span class="c c2" style="letter-spacing:.19px">Stopped</span><span class="c c3" style="letter-spacing:-.66px">Manual</span><span class="c c4" style="letter-spacing:-.20px">Normal</span><span class="c c5" style="letter-spacing:.57px">TDI</span><span class="c c6" style="letter-spacing:-.26px">Ndisuio, eaphost</span><span class="c c7" style="letter-spacing:-.25px">Generic Host Proces...</span><span class="c c8" style="letter-spacing:.25px">5.1.2600.55...</span><span class="c c9" style="letter-spacing:-.05px">Microsoft Corp...</span></div>
<div class="r k" style="top:929px"><svg class="ic" width="16" height="16" viewBox="0 0 16 16"><use href="#gear"/></svg><span class="c c0" style="letter-spacing:-.47px">EapHost</span><span class="c c1" style="letter-spacing:-.03px">Служба протокола EAP</span><span class="c c2" style="letter-spacing:.19px">Stopped</span><span class="c c3" style="letter-spacing:-.66px">Manual</span><span class="c c4" style="letter-spacing:-.20px">Normal</span><span class="c c6" style="letter-spacing:-.78px">RpcSs</span><span class="c c7" style="letter-spacing:-.25px">Generic Host Proces...</span><span class="c c8" style="letter-spacing:.25px">5.1.2600.55...</span><span class="c c9" style="letter-spacing:-.05px">Microsoft Corp...</span></div>
<div class="r rd" style="top:947px"><svg class="ic" width="16" height="16" viewBox="0 0 16 16"><use href="#gear"/></svg><span class="c c0" style="letter-spacing:-.36px">FastUserSwitc...</span><span class="c c1" style="letter-spacing:.16px">Совместимость быстрого перек...</span><span class="c c2" style="letter-spacing:.19px">Stopped</span><span class="c c3" style="letter-spacing:-.53px">Disabled</span><span class="c c4" style="letter-spacing:-.20px">Normal</span><span class="c c6" style="letter-spacing:-.15px">TermService</span><span class="c c7" style="letter-spacing:-.25px">Generic Host Proces...</span><span class="c c8" style="letter-spacing:.25px">5.1.2600.55...</span><span class="c c9" style="letter-spacing:-.05px">Microsoft Corp...</span></div>
<div class="r k" style="top:965px"><svg class="ic" width="16" height="16" viewBox="0 0 16 16"><use href="#gear"/></svg><span class="c c0" style="letter-spacing:-.07px">FontCache3....</span><span class="c c1" style="letter-spacing:-.11px">Windows Presentation Foundation ...</span><span class="c c2" style="letter-spacing:.19px">Stopped</span><span class="c c3" style="letter-spacing:-.66px">Manual</span><span class="c c4" style="letter-spacing:-.20px">Normal</span><span class="c c7" style="letter-spacing:-.09px">PresentationFontCa...</span><span class="c c8" style="letter-spacing:.25px">3.0.6920.14...</span><span class="c c9" style="letter-spacing:-.05px">Microsoft Corp...</span></div>
</div>
<div id="hdr">
<div class="hc" style="left:1px;width:120px"><span style="left:4.5px;letter-spacing:-0.60px">Name</span></div>
<div class="hc" style="left:121px;width:236px"><span style="left:4.0px;letter-spacing:-0.40px">Display Name</span></div>
<div class="hc" style="left:357px;width:70px"><span style="left:6.0px;letter-spacing:0.60px">St...</span><svg class="sort" width="10" height="10" viewBox="0 0 10 10"><path d="M0.500 8.500L4.500 0.500" stroke="#808080" fill="none"/><path d="M4.500 0.500L8.500 8.500H0.500" stroke="#fff" fill="none"/></svg></div>
<div class="hc" style="left:427px;width:80px"><span style="left:6.0px;letter-spacing:0.22px">Startup ...</span></div>
<div class="hc" style="left:507px;width:100px"><span style="left:5.0px;letter-spacing:0.08px">ErrorControl</span></div>
<div class="hc" style="left:607px;width:130px"><span style="left:5.8px;letter-spacing:-0.48px">Group</span></div>
<div class="hc" style="left:737px;width:150px"><span style="left:5.0px;letter-spacing:-0.32px">Dependencies</span></div>
<div class="hc" style="left:887px;width:150px"><span style="left:5.0px;letter-spacing:-0.31px">File Description</span></div>
<div class="hc" style="left:1037px;width:100px"><span style="left:5.0px;letter-spacing:-0.49px">File Version</span></div>
<div class="hc" style="left:1137px;width:120px"><span style="left:6.0px;letter-spacing:-0.07px">Company</span></div>
<div class="hc" style="left:1257px;width:2px"></div>
</div>
<div class="dith" style="position:absolute;left:1259px;top:80px;width:20px;height:898px"></div>
<div class="sb" style="left:1259px;top:80px;width:20px;height:20px"><i class="ar" style="left:4px;top:6px;border-left:5px solid transparent;border-right:5px solid transparent;border-bottom:5px solid #000"></i></div>
<div class="sb" style="left:1259px;top:181px;width:20px;height:428px"></div>
<div class="sb" style="left:1259px;top:958px;width:20px;height:20px"><i class="ar" style="left:4px;top:7px;border-left:5px solid transparent;border-right:5px solid transparent;border-top:5px solid #000"></i></div>
<div class="dith" style="position:absolute;left:1px;top:978px;width:1258px;height:20px"></div>
<div class="sb" style="left:1px;top:978px;width:20px;height:20px"><i class="ar" style="left:5px;top:4px;border-top:5px solid transparent;border-bottom:5px solid transparent;border-right:5px solid #000"></i></div>
<div class="sb" style="left:21px;top:978px;width:714px;height:20px"></div>
<div class="sb" style="left:1239px;top:978px;width:20px;height:20px"><i class="ar" style="left:7px;top:4px;border-top:5px solid transparent;border-bottom:5px solid transparent;border-left:5px solid #000"></i></div>
<div style="position:absolute;left:1259px;top:978px;width:20px;height:20px;background:#d4d0c8"></div>
<div id="frame"></div>
<div id="status"><div id="spane"></div><span style="left:2.3px;letter-spacing:-0.16px">96 item(s), 1 Selected</span></div>
<div id="wm">tehnari.ru</div>
<div class="menu" style="left:395px;top:586px;width:301px;height:219px"><div class="mi " style="top:1px;width:292px"><span class="t" style="left:19.6px;letter-spacing:-0.22px">Change <u>S</u>tatus</span><i class="ma" style="left:283px"></i></div><div class="mi h" style="top:22px;width:292px"><span class="t" style="left:19.6px;letter-spacing:-0.03px">Change Startup <u>T</u>ype</span><i class="ma" style="left:283px"></i></div><div class="ms" style="top:49px;width:290px"></div><div class="mi " style="top:55px;width:292px"><span class="t" style="left:19.6px;letter-spacing:-0.27px">HTML Report - All Items</span></div><div class="mi " style="top:76px;width:292px"><span class="t" style="left:19.6px;letter-spacing:-0.22px">HTML Report - Selected Items</span></div><div class="ms" style="top:103px;width:290px"></div><div class="mi " style="top:109px;width:292px"><span class="t" style="left:19.6px;letter-spacing:-0.32px">Choose Colum<u>n</u>s</span></div><div class="mi " style="top:130px;width:292px"><span class="t" style="left:19.6px;letter-spacing:-0.36px"><u>A</u>uto Size Columns</span><span class="t" style="left:211.6px;letter-spacing:-0.27px">Ctrl+Plus</span></div><div class="ms" style="top:157px;width:290px"></div><div class="mi " style="top:163px;width:292px"><span class="t" style="left:19.6px;letter-spacing:-0.23px"><u>P</u>roperties</span><span class="t" style="left:211.6px;letter-spacing:-0.10px">Alt+Enter</span></div><div class="ms" style="top:190px;width:290px"></div><div class="mi " style="top:195px;width:292px"><span class="t" style="left:19.6px;letter-spacing:-0.25px"><u>R</u>efresh</span><span class="t" style="left:211.6px;letter-spacing:-1.00px">F5</span></div></div><div class="menu" style="left:690px;top:606px;width:170px;height:111px"><div class="mi " style="top:2px;width:164px"><span class="t" style="left:20.6px;letter-spacing:-0.08px"><u>A</u>utomatic</span><span class="t" style="left:92.9px;letter-spacing:-0.25px">Ctrl+F2</span></div><div class="mi " style="top:23px;width:164px"><span class="t" style="left:20.6px;letter-spacing:-0.46px"><u>M</u>anual</span><span class="t" style="left:92.9px;letter-spacing:-0.25px">Ctrl+F3</span></div><div class="mi h" style="top:44px;width:164px"><span class="t" style="left:20.6px;letter-spacing:-0.48px"><u>D</u>isabled</span><span class="t" style="left:92.9px;letter-spacing:-0.25px">Ctrl+F4</span></div><div class="mi d" style="top:65px;width:164px"><span class="t" style="left:20.6px;letter-spacing:0.46px"><u>B</u>oot</span><span class="t" style="left:92.9px;letter-spacing:-0.25px">Ctrl+F6</span></div><div class="mi d" style="top:86px;width:164px"><span class="t" style="left:20.6px;letter-spacing:-0.40px"><u>S</u>ystem</span><span class="t" style="left:92.9px;letter-spacing:-0.25px">Ctrl+F9</span></div></div>
</div>
</body>
</html>
